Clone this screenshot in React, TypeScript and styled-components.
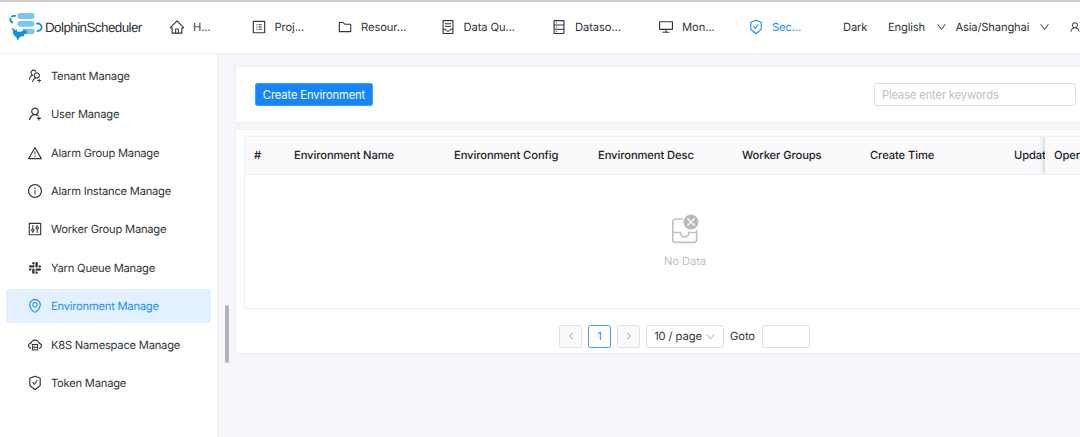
import React from 'react';
import styled, { createGlobalStyle } from 'styled-components';
import {
  AiOutlineHome, AiOutlineProfile, AiOutlineFolder, AiOutlineContainer, AiOutlineDatabase,
  AiOutlineDesktop, AiOutlineSafetyCertificate, AiOutlineUser, AiOutlineUsergroupAdd,
  AiOutlineUserAdd, AiOutlineWarning, AiOutlineInfoCircle, AiOutlineControl, AiOutlineSlack,
  AiOutlineEnvironment, AiOutlineCloudServer,
} from 'react-icons/ai';

const Global = createGlobalStyle`
  * { box-sizing: border-box; }
  body {
    margin: 0;
    overflow: hidden;
    font-family: Inter, "Liberation Sans", sans-serif;
    font-size: 11.2px;
    line-height: 18px;
    letter-spacing: -0.09px;
    text-rendering: geometricPrecision;
    color: #333639;
    background: #f5f5fa;
  }
`;

const Page = styled.div`
  width: 1080px;
  height: 437px;
  display: flex;
  flex-direction: column;
  overflow: hidden;
`;

const Header = styled.header`
  height: 54px;
  flex: none;
  display: flex;
  align-items: center;
  padding-bottom: 1px;
  background: #fff;
  border-top: 2px solid #cecece;
  border-bottom: 1px solid #efeff5;
  white-space: nowrap;
`;

const Brand = styled.div`
  width: 169px;
  padding-left: 9px;
  display: flex;
  align-items: center;
  gap: 2px;
  flex: none;
`;

const BrandName = styled.span`
  font-family: "Liberation Sans", Arial, sans-serif;
  font-size: 13.4px;
  letter-spacing: -0.56px;
  padding-top: 2px;
`;

const NavItem = styled.div<{ $width: number; $active?: boolean }>`
  width: ${(p) => p.$width}px;
  flex: none;
  display: flex;
  align-items: center;
  gap: 8px;
  color: ${(p) => (p.$active ? '#1890ff' : '#333639')};
  svg { width: 16px; height: 16px; flex: none; }
`;

const HeaderOption = styled.div<{ $width: number }>`
  width: ${(p) => p.$width}px;
  flex: none;
  display: flex;
  align-items: center;
  justify-content: space-between;
  padding-right: 10px;
  letter-spacing: -0.16px;
`;

const UserButton = styled.div`
  width: 14px;
  flex: none;
  display: flex;
  svg { width: 12px; height: 12px; flex: none; }
`;

const Body = styled.div`
  flex: 1;
  min-height: 0;
  display: flex;
`;

const Sidebar = styled.nav`
  width: 218px;
  flex: none;
  background: #fff;
  border-right: 1px solid #efeff5;
  padding: 4.6px 6.4px;
  display: flex;
  flex-direction: column;
  gap: 4.8px;
  letter-spacing: -0.23px;
`;

const MenuItem = styled.div<{ $active?: boolean }>`
  height: 33.6px;
  flex: none;
  display: flex;
  align-items: center;
  gap: 8px;
  padding: 1px 0 0 20.6px;
  border-radius: 2.4px;
  color: ${(p) => (p.$active ? '#1890ff' : '#333639')};
  background: ${(p) => (p.$active ? '#e3f1fe' : 'transparent')};
  svg { width: 16px; height: 16px; flex: none; }
`;

const Gutter = styled.div`
  width: 17px;
  flex: none;
  padding: 251px 0 0 7px;
`;

const ScrollThumb = styled.div`
  width: 4px;
  height: 58px;
  border-radius: 2px;
  background: #b3b3b7;
`;

const Main = styled.main`
  width: 860px;
  flex: none;
  padding-top: 12px;
  display: flex;
  flex-direction: column;
  gap: 6px;
`;

const Card = styled.section<{ $height: number }>`
  height: ${(p) => p.$height}px;
  flex: none;
  background: #fff;
  border: 1px solid #efeff5;
  border-radius: 2.4px;
`;

const Toolbar = styled(Card)`
  display: flex;
  align-items: center;
  justify-content: space-between;
  padding: 0 18px 0 19px;
`;

const PrimaryButton = styled.button`
  width: 118px;
  height: 22.4px;
  padding: 1px 0 0;
  border: 1px solid #3f9bff;
  border-radius: 2.4px;
  background: #1684fc;
  color: #fff;
  font: inherit;
  letter-spacing: -0.12px;
  line-height: 20px;
`;

const Search = styled.input`
  width: 202px;
  height: 23px;
  padding: 0 7px;
  border: 1px solid #e0e0e6;
  border-radius: 2.4px;
  font: inherit;
  letter-spacing: -0.15px;
  outline: none;
  &::placeholder { color: #c2c2c2; opacity: 1; }
`;

const TableCard = styled(Card)`
  padding: 6px 0 0 8px;
  display: flex;
  flex-direction: column;
`;

const Table = styled.div`
  height: 173px;
  flex: none;
  border: 1px solid #efeff5;
  border-radius: 2.4px 0 0 0;
  overflow: hidden;
`;

const HeadRow = styled.div`
  height: 38px;
  display: flex;
  background: #fafafc;
  border-bottom: 1px solid #efeff5;
`;

const HeadCell = styled.div<{ $width: number; $fixed?: boolean }>`
  width: ${(p) => p.$width}px;
  flex: none;
  padding-left: 9px;
  line-height: 36px;
  height: 37px;
  font-weight: 500;
  color: #1f2225;
  white-space: nowrap;
  overflow: ${(p) => (p.$fixed ? 'visible' : 'hidden')};
  background: #fafafc;
  box-shadow: ${(p) => (p.$fixed ? '-1px 0 5px rgba(0, 0, 0, 0.2)' : 'none')};
  clip-path: ${(p) => (p.$fixed ? 'inset(0 0 0 -8px)' : 'none')};
`;

const Empty = styled.div`
  display: flex;
  flex-direction: column;
  align-items: center;
  padding: 39px 0 0 43px;
  width: 837px;
  gap: 8px;
  color: #c2c2c2;
`;

const Pager = styled.div`
  display: flex;
  align-items: center;
  padding: 16px 0 0 315px;
  gap: 6px;
`;

const PageBox = styled.div<{ $width?: number; $state?: 'active' | 'disabled' }>`
  width: ${(p) => p.$width ?? 23}px;
  height: 23px;
  flex: none;
  display: flex;
  align-items: center;
  justify-content: center;
  gap: 3px;
  padding-bottom: 1px;
  border: 1px solid ${(p) => (p.$state === 'active' ? '#3f9bff' : '#e0e0e6')};
  border-radius: 2.4px;
  background: ${(p) => (p.$state === 'disabled' ? '#fafafc' : '#fff')};
  color: ${(p) => (p.$state === 'active' ? '#1890ff' : '#333639')};
  svg { color: #c2c2c2; }
`;

const PagerLabel = styled.span`
  width: 26px;
  padding-bottom: 1px;
`;

const Logo = () => (
  <svg width="34" height="30" viewBox="0 0 34 30">
    <g fill="#79c7ee">
      <rect x="8.5" y="1" width="17" height="6" rx="2.7" />
      <rect x="8.5" y="9" width="17" height="5.7" rx="2.7" />
      <path d="M13 16.700h10a2.700 2.700 0 0 1 0 5.500h-8z" />
    </g>
    <g fill="none" stroke="#1690d6" strokeWidth="1.800">
      <path d="M6.800 3.800H4.500a3.400 3.400 0 0 0-.6 6.700" strokeDasharray="5 1 20" />
      <path d="M27.300 11.500h1.600a3.700 3.700 0 0 1 0 7.400h-1.200" />
    </g>
    <path fill="#1690d6" d="M2.300 16.200c1.800-.2 3 .6 3.900 2.200l1.600-1.300.3 2.500c2.200.6 4.400.2 6.200-1.200l3.400-1.200-.6 2 1.700 1.500c-1.600.2-2.900.8-3.900 2l.2 2-1.900-.8c-1 .5-1.900 1-2.600 1.700L8.400 28.500 7.300 25.300C4.700 23.800 3.400 21.200 4 18.600z" />
  </svg>
);

const EmptyIcon = () => (
  <svg width="28" height="30" viewBox="0 0 28 30" fill="none" stroke="#c2c2c2" strokeWidth="1.7">
    <path d="M12 5H4.500A2.700 2.700 0 0 0 1.800 7.700v18A2.700 2.700 0 0 0 4.500 28.400h18.500a2.700 2.700 0 0 0 2.700-2.700V16" />
    <path d="M1.800 18.500h7.500a4.300 4.300 0 0 0 8.600 0h7.800" />
    <circle cx="20" cy="8" r="7.500" fill="#b9b9b9" stroke="none" />
    <path d="m16.800 4.800 6.400 6.400m0-6.400-6.400 6.400" stroke="#fff" strokeWidth="1.300" strokeLinecap="round" />
  </svg>
);

const Chevron = ({ d, size = 12 }: { d: string; size?: number }) => (
  <svg width={size} height={size} viewBox="0 0 12 12" fill="none" stroke="currentColor" strokeWidth="1.1" strokeLinecap="round" strokeLinejoin="round">
    <path d={d} />
  </svg>
);

const Caret = () => (
  <svg width="9" height="8" viewBox="0 0 9 8" fill="none" stroke="currentColor" strokeWidth="1">
    <path d="M.7 1.200 4.500 6.500 8.300 1.200" />
  </svg>
);

const nav = [
  { icon: AiOutlineHome, label: 'H...', width: 81.5 },
  { icon: AiOutlineProfile, label: 'Proj...', width: 86.5 },
  { icon: AiOutlineFolder, label: 'Resour...', width: 102.5 },
  { icon: AiOutlineContainer, label: 'Data Qu...', width: 111.5 },
  { icon: AiOutlineDatabase, label: 'Dataso...', width: 107 },
  { icon: AiOutlineDesktop, label: 'Mon...', width: 90 },
  { icon: AiOutlineSafetyCertificate, label: 'Sec...', width: 95, active: true },
];

const menu = [
  { icon: AiOutlineUsergroupAdd, label: 'Tenant Manage' },
  { icon: AiOutlineUserAdd, label: 'User Manage' },
  { icon: AiOutlineWarning, label: 'Alarm Group Manage' },
  { icon: AiOutlineInfoCircle, label: 'Alarm Instance Manage' },
  { icon: AiOutlineControl, label: 'Worker Group Manage' },
  { icon: AiOutlineSlack, label: 'Yarn Queue Manage' },
  { icon: AiOutlineEnvironment, label: 'Environment Manage', active: true },
  { icon: AiOutlineCloudServer, label: 'K8S Namespace Manage' },
  { icon: AiOutlineSafetyCertificate, label: 'Token Manage' },
];

const columns = [
  { label: '#', width: 40 },
  { label: 'Environment Name', width: 160 },
  { label: 'Environment Config', width: 144 },
  { label: 'Environment Desc', width: 144 },
  { label: 'Worker Groups', width: 128 },
  { label: 'Create Time', width: 144 },
  { label: 'Update Time', width: 40 },
  { label: 'Operation', width: 90, fixed: true },
];

export default function App() {
  return (
    <Page>
      <Global />
      <Header>
        <Brand>
          <Logo />
          <BrandName>DolphinScheduler</BrandName>
        </Brand>
        {nav.map(({ icon: Icon, label, width, active }) => (
          <NavItem key={label} $width={width} $active={active}>
            <Icon />
            {label}
          </NavItem>
        ))}
        <HeaderOption $width={45}>Dark</HeaderOption>
        <HeaderOption $width={67.5}>English<Caret /></HeaderOption>
        <HeaderOption $width={103.5}>Asia/Shanghai<Caret /></HeaderOption>
        <HeaderOption $width={10} />
        <UserButton><AiOutlineUser /></UserButton>
      </Header>
      <Body>
        <Sidebar>
          {menu.map(({ icon: Icon, label, active }) => (
            <MenuItem key={label} $active={active}>
              <Icon />
              {label}
            </MenuItem>
          ))}
        </Sidebar>
        <Gutter><ScrollThumb /></Gutter>
        <Main>
          <Toolbar $height={57}>
            <PrimaryButton>Create Environment</PrimaryButton>
            <Search placeholder="Please enter keywords" />
          </Toolbar>
          <TableCard $height={225}>
            <Table>
              <HeadRow>
                {columns.map(({ label, width, fixed }) => (
                  <HeadCell key={label} $width={width} $fixed={fixed}>{label}</HeadCell>
                ))}
              </HeadRow>
              <Empty>
                <EmptyIcon />
                No Data
              </Empty>
            </Table>
            <Pager>
              <PageBox $state="disabled"><Chevron d="M7.500 3 4.500 6l3 3" /></PageBox>
              <PageBox $state="active">1</PageBox>
              <PageBox $state="disabled"><Chevron d="M4.500 3l3 3-3 3" /></PageBox>
              <PageBox $width={78}>10 / page<Chevron d="M2 4 6 8.500l4-4.500" size={11} /></PageBox>
              <PagerLabel>Goto</PagerLabel>
              <PageBox $width={48} />
            </Pager>
          </TableCard>
        </Main>
      </Body>
    </Page>
  );
}
